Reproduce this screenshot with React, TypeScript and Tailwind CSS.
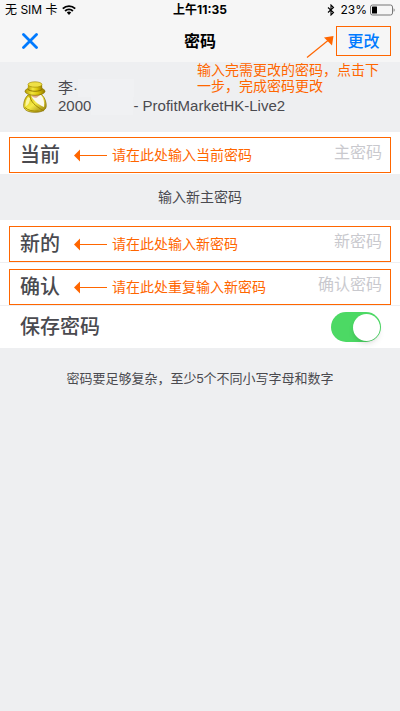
type PasswordRowProps = {
  id: string;
  label: string;
  placeholder: string;
  note: string;
};

function ArrowLeft() {
  return (
    <svg width="33" height="13" viewBox="0 0 33 13" aria-hidden="true" className="shrink-0">
      <path d="M0 6.5 6 0.5v12z" fill="#ff6600" />
      <path d="M5 6.5h28" stroke="#ff6600" strokeWidth="1" />
    </svg>
  );
}

function PasswordRow({ id, label, placeholder, note }: PasswordRowProps) {
  return (
    <div className="flex h-9 items-center border border-[#ff6600] pr-2 pl-[10px]">
      <label htmlFor={id} className="w-[54px] shrink-0 text-xl leading-8 font-medium text-[#4a4a4f]">
        {label}
      </label>
      <ArrowLeft />
      <span className="ml-[5px] shrink-0 text-sm text-[#ff6600]">{note}</span>
      <input
        id={id}
        type="password"
        placeholder={placeholder}
        className="h-8 min-w-0 flex-1 bg-transparent pb-1 text-right text-base outline-none placeholder:text-[#c9c9ce]"
      />
    </div>
  );
}

function StatusBar() {
  return (
    <div className="grid h-5 grid-cols-3 items-center px-[5px] text-xs text-black">
      <div className="flex items-center gap-1">
        <span>无 SIM 卡</span>
        <svg width="14" height="10" viewBox="0 0 14 10" aria-hidden="true">
          <g fill="none" stroke="#000" strokeWidth="1.9">
            <path d="M0.8 3.6a9 9 0 0 1 12.4 0" />
            <path d="M3.1 6a5.6 5.6 0 0 1 7.8 0" />
          </g>
          <path d="M4.8 7.6a3.2 3.2 0 0 1 4.4 0L7 9.9z" />
        </svg>
      </div>
      <span className="text-center font-bold">上午11:35</span>
      <div className="flex items-center justify-end">
        <svg width="8" height="12" viewBox="0 0 8 12" aria-hidden="true">
          <path d="M1 3.500 6.500 8.500 4 11V1l2.500 2.500L1 8.500" fill="none" stroke="#000" strokeWidth="1.100" />
        </svg>
        <span className="ml-[5px]">23%</span>
        <svg width="25" height="12" viewBox="0 0 25 12" aria-hidden="true" className="ml-[3px]">
          <rect x="0.5" y="1" width="22" height="10" rx="2" fill="none" stroke="#777" />
          <rect x="2" y="2.5" width="5" height="7" rx="0.5" />
          <path d="M23.600 4.200c1.400.5 1.400 3.100 0 3.600z" fill="#777" />
        </svg>
      </div>
    </div>
  );
}

function AccountIcon() {
  return (
    <svg width="24" height="32" viewBox="0 0 24 32" aria-hidden="true">
      <defs>
        <linearGradient id="hat" x1="0" x2="1">
          <stop offset="0" stopColor="#b59c00" />
          <stop offset="0.35" stopColor="#f3e640" />
          <stop offset="0.65" stopColor="#dcc60c" />
          <stop offset="1" stopColor="#937900" />
        </linearGradient>
        <linearGradient id="coat" x1="0" y1="0" x2="1" y2="1">
          <stop offset="0" stopColor="#cdb600" />
          <stop offset="0.5" stopColor="#f5ea48" />
          <stop offset="1" stopColor="#8a7000" />
        </linearGradient>
      </defs>
      {/* coat */}
      <path d="M5 14C1.500 17 0.500 22 0.700 25.500 1.200 29.500 6 31.300 12 31.300s10.700-1.800 11.200-5.800c0.300-4-1.200-9-4.700-12z" fill="url(#coat)" stroke="#857000" strokeWidth="0.700" />
      <path d="M5 16c-2.200 3-2.600 6-2.500 9.500C5.500 24 7 21 7 17z" fill="#fbf6a0" />
      {/* collar and face */}
      <path d="M8 14c1.500 5 7 9.500 13 12C21.700 21 20.500 17 18 14z" fill="#fbf9ee" />
      <path d="M7.500 13.500c1.500 2.500 4 4 6.500 3l3.500-3z" fill="#e0a88c" />
      {/* lapel fold */}
      <path d="M7 15c0.500 5.500 5 10 14 15" fill="none" stroke="#9a8300" strokeWidth="0.900" />
      <path d="M2 26.500c3 3 8 4 13.500 3.500" fill="none" stroke="#a08a00" strokeWidth="1" />
      {/* hat */}
      <ellipse cx="12" cy="10.300" rx="10" ry="4" fill="url(#hat)" stroke="#8a7200" strokeWidth="0.700" />
      <path d="M5 3.500 4.600 8.500c3 3 11.800 3 14.800 0L19 3.500z" fill="url(#hat)" />
      <path d="M4.700 8.300c3 2.600 11.600 2.600 14.600 0" fill="none" stroke="#8a7200" strokeWidth="0.900" />
      <ellipse cx="12" cy="3.500" rx="7" ry="2.700" fill="#efe046" stroke="#9b8200" strokeWidth="0.600" />
    </svg>
  );
}

export default function App() {
  return (
    <div className="relative min-h-screen bg-[#eeeff1] font-['Liberation_Sans','Noto_Sans_CJK_SC',sans-serif] text-[#4a4a4f]">
      <header className="bg-[#f6f6f6] font-['Inter','Noto_Sans_CJK_SC',sans-serif]">
        <StatusBar />
        <div className="grid h-[42px] grid-cols-3 items-center px-[9px]">
          <button type="button" aria-label="关闭" className="justify-self-start px-[13px]">
            <svg width="16" height="16" viewBox="0 0 16 16" aria-hidden="true">
              <path d="M1.500 1.500l13 13M14.500 1.500l-13 13" stroke="#007aff" strokeWidth="2.800" strokeLinecap="round" />
            </svg>
          </button>
          <h1 className="text-center text-base font-bold text-black">密码</h1>
          <button
            type="button"
            className="h-[30px] w-[55px] justify-self-end border border-[#ff6600] text-base font-medium text-[#007aff]"
          >
            更改
          </button>
        </div>
      </header>

      {/* note that points at the submit button */}
      <div className="absolute top-[34px] right-[20px] flex w-[183px] flex-col text-sm leading-4 text-[#ff6600]">
        <svg width="28" height="24" viewBox="0 0 28 24" aria-hidden="true" className="mr-[46px] self-end">
          <path d="M1 23.500 22 6.500" stroke="#ff6600" strokeWidth="1.200" />
          <path d="M27.500 2 18 3.500l8 8z" fill="#ff6600" />
        </svg>
        <p className="mt-1">输入完需更改的密码，点击下一步，完成密码更改</p>
      </div>

      <main>
        <section className="flex h-[70px] items-center gap-[11px] pl-[23px] text-[15px] leading-[18px]">
          <AccountIcon />
          <div>
            <div className="flex">
              <span>李·</span>
              <span className="w-14 bg-[#f0f1f3]" />
            </div>
            <div className="flex">
              <span>2000</span>
              <span className="w-[42px] bg-[#f0f1f3]" />
              <span>- ProfitMarketHK-Live2</span>
            </div>
          </div>
        </section>

        <form>
          <div className="bg-white px-[9px] pt-[5px] pb-px">
            <PasswordRow id="current" label="当前" placeholder="主密码" note="请在此处输入当前密码" />
          </div>

          <h2 className="py-3 text-center text-sm leading-[22px]">输入新主密码</h2>

          <div className="bg-white">
            <div className="border-b border-[#efeff1] px-[9px] pt-[6px]">
              <PasswordRow id="new" label="新的" placeholder="新密码" note="请在此处输入新密码" />
            </div>
            <div className="border-b border-[#efeff1] px-[9px] pt-[6px]">
              <PasswordRow id="confirm" label="确认" placeholder="确认密码" note="请在此处重复输入新密码" />
            </div>
            <div className="flex h-[42px] items-center justify-between pr-[19px] pl-5">
              <label htmlFor="save" className="text-xl font-medium">
                保存密码
              </label>
              <input
                id="save"
                type="checkbox"
                role="switch"
                defaultChecked
                className="flex h-[30px] w-[50px] appearance-none items-center rounded-full bg-[#d8d8dc] px-px before:size-[27px] before:rounded-full before:bg-white before:shadow-md checked:justify-end checked:bg-[#4cd964]"
              />
            </div>
          </div>
        </form>

        <p className="pt-5 text-center text-[13px] leading-[22px]">
          密码要足够复杂，至少5个不同小写字母和数字
        </p>
      </main>
    </div>
  );
}
